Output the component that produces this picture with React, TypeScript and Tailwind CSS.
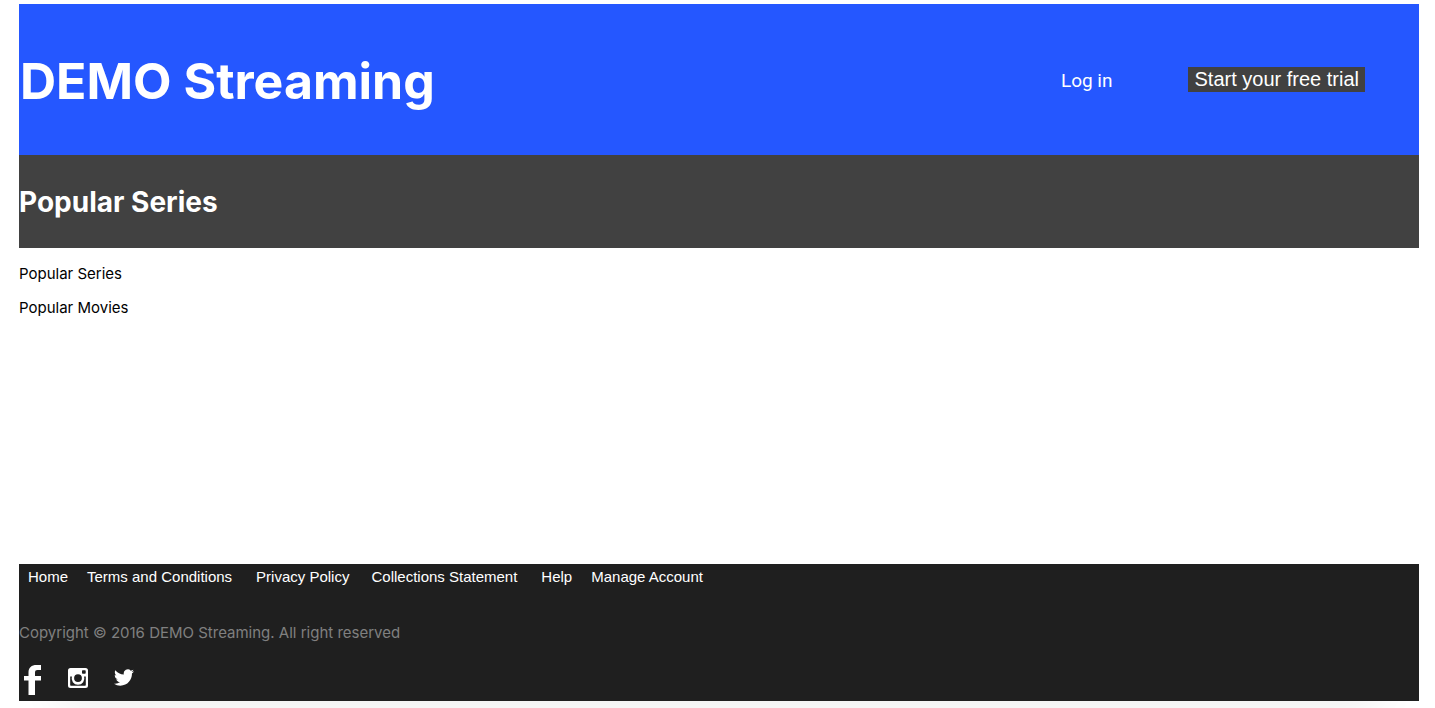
const footerLinks = [
  { label: "Home", spacing: "mr-[19px]" },
  { label: "Terms and Conditions", spacing: "mr-6" },
  { label: "Privacy Policy", spacing: "mr-[22px]" },
  { label: "Collections Statement", spacing: "mr-6" },
  { label: "Help", spacing: "mr-[19px]" },
  { label: "Manage Account", spacing: "" },
];

function Header() {
  return (
    <header className="flex items-start justify-between bg-[#2557ff] pt-[38px] pr-[54px] pb-[35px] text-white">
      <h1 className="pl-px text-[50px] leading-[78px] font-bold">
        DEMO Streaming
      </h1>
      <nav className="flex items-start gap-[76px] pt-[25px]">
        <a href="#login" className="pt-0.5 font-['Roboto',sans-serif] text-[19px] leading-6">
          Log in
        </a>
        <button
          type="button"
          className="bg-[#414141] px-1.5 font-['Liberation_Sans',sans-serif] text-xl leading-[25px]"
        >
          Start your free trial
        </button>
      </nav>
    </header>
  );
}

function FacebookIcon() {
  return (
    <svg viewBox="0 0 18 30" className="h-[30px] w-[18px]" fill="currentColor" aria-hidden="true">
      <path d="M4.500 30V15.500H0v-4.500h4.500V7.500C4.500 2.500 7.500 0 12.500 0H17v5h-3.500c-1.700 0-2.500.8-2.500 2.500V11h6v4.500h-6V30Z" />
    </svg>
  );
}

function InstagramIcon() {
  return (
    <svg viewBox="0 0 20 20" className="size-5" fill="currentColor" aria-hidden="true">
      <path
        fillRule="evenodd"
        d="M2.500 0h15A2.500 2.500 0 0 1 20 2.500v15a2.500 2.500 0 0 1-2.500 2.500h-15A2.500 2.500 0 0 1 0 17.500v-15A2.500 2.500 0 0 1 2.500 0ZM14.700 2.200a.7.7 0 0 0-.7.7v2.200c0 .4.3.7.7.7H17c.4 0 .7-.3.7-.7V2.900a.7.7 0 0 0-.7-.7ZM2.200 8.500v8.300c0 .6.400 1 1 1h13.600c.6 0 1-.4 1-1V8.500h-1.700a6.400 6.400 0 1 1-12.200 0ZM10 6.200a3.900 3.900 0 1 0 0 7.800 3.900 3.900 0 0 0 0-7.800Z"
      />
    </svg>
  );
}

function TwitterIcon() {
  return (
    <svg viewBox="0 2 24 20" className="h-[17px] w-5" fill="currentColor" aria-hidden="true">
      <path d="M23.950 4.570a10 10 0 0 1-2.820.77 4.960 4.960 0 0 0 2.160-2.720c-.95.550-2 .950-3.130 1.180a4.920 4.920 0 0 0-8.380 4.480C7.690 8.090 4.070 6.130 1.640 3.160a4.820 4.820 0 0 0-.66 2.480c0 1.710.87 3.210 2.190 4.100a4.900 4.900 0 0 1-2.230-.62v.06a4.920 4.920 0 0 0 3.950 4.830 5 5 0 0 1-2.210.08 4.940 4.940 0 0 0 4.600 3.420A9.870 9.870 0 0 1 0 19.540a13.990 13.990 0 0 0 7.550 2.210c9.050 0 14-7.500 14-13.980 0-.210 0-.420-.02-.63a9.940 9.940 0 0 0 2.460-2.550z" />
    </svg>
  );
}

function Footer() {
  return (
    <footer className="bg-[#1f1f1f] pb-1.5 text-white shadow-[0_44px_40px_-40px_rgba(0,0,0,0.08)]">
      <nav className="flex flex-wrap pt-1 pl-[9px] font-['Liberation_Sans',sans-serif] text-[15px] leading-[18px]">
        {footerLinks.map(({ label, spacing }) => (
          <a key={label} href="#" className={spacing}>
            {label}
          </a>
        ))}
      </nav>
      <p className="mt-[37px] text-[15px] leading-5 text-[#808080]">
        Copyright © 2016 DEMO Streaming. All right reserved
      </p>
      <div className="mt-[22px] flex items-start pl-[5px]">
        <a href="#facebook" aria-label="Facebook">
          <FacebookIcon />
        </a>
        <a href="#instagram" aria-label="Instagram" className="mt-[3px] ml-[26px]">
          <InstagramIcon />
        </a>
        <a href="#twitter" aria-label="Twitter" className="mt-1 ml-[26px]">
          <TwitterIcon />
        </a>
      </div>
    </footer>
  );
}

export default function App() {
  return (
    <div className="flex min-h-screen flex-col overflow-hidden bg-white pt-1 pr-4 pb-[7px] pl-[19px] font-['Inter',sans-serif] text-black [&_svg]:block">
      <Header />
      <section className="bg-[#414141] pt-[29px] pb-[27px] text-white">
        <h2 className="text-[28px] leading-[37px] font-bold">Popular Series</h2>
      </section>
      <main className="flex grow flex-col items-start gap-3.5 py-4 text-[15px] leading-5">
        <a href="#series">Popular Series</a>
        <a href="#movies">Popular Movies</a>
      </main>
      <Footer />
    </div>
  );
}
